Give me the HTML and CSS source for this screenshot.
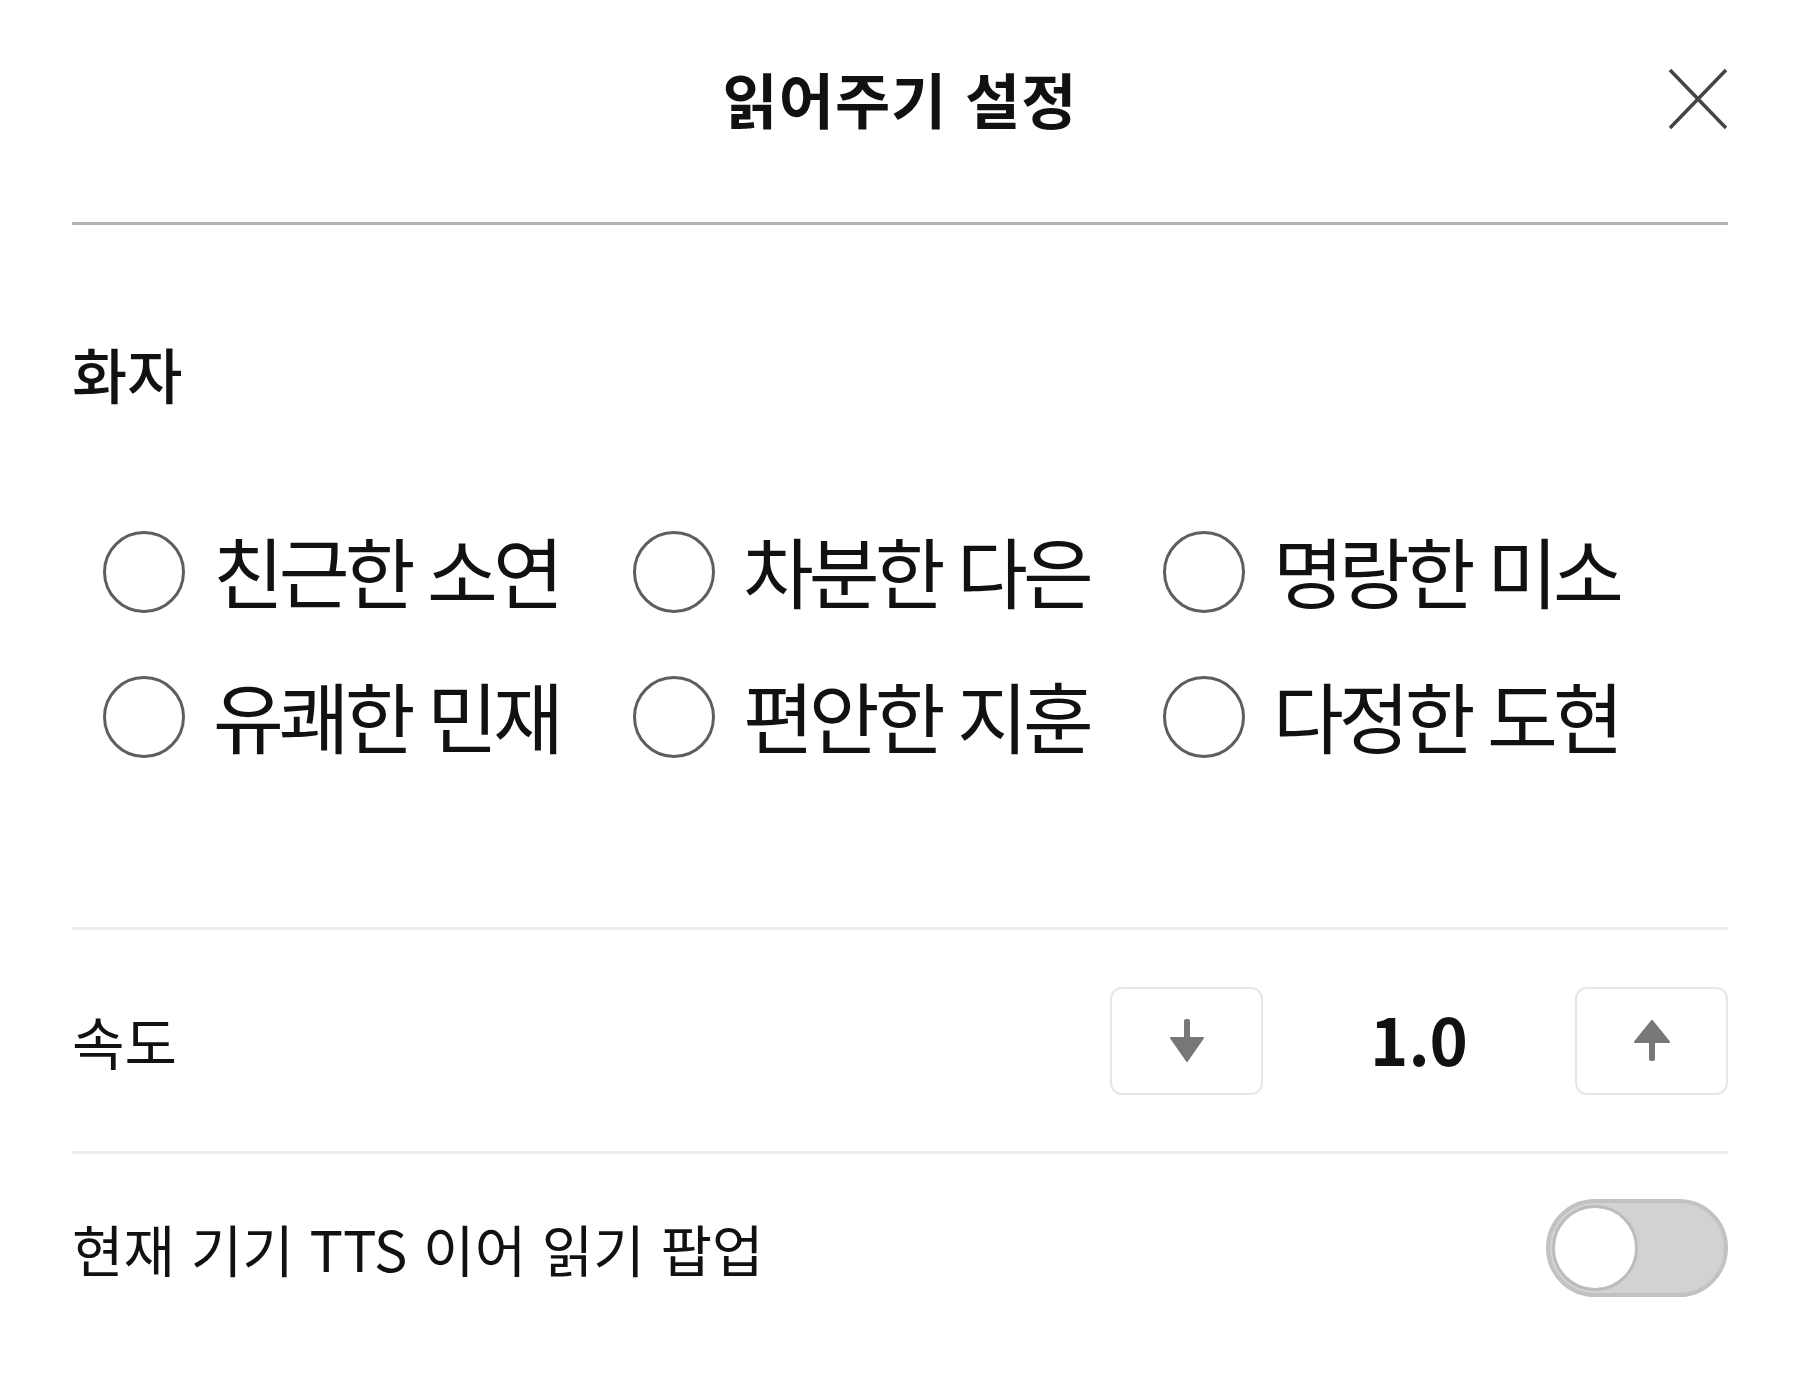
FILE: index.html
```html
<!DOCTYPE html>
<html lang="ko">
<head>
  <meta charset="UTF-8">
  <title>읽어주기 설정</title>
  <link rel="stylesheet" href="styles.css">
</head>
<body>

  <div class="sheet">
    <header class="sheet-head">
      <h1>읽어주기 설정</h1>
      <button class="close-btn" type="button" aria-label="닫기">
        <svg width="60" height="62" viewBox="0 0 60 62">
          <line x1="2" y1="2" x2="58" y2="60" stroke="#444" stroke-width="3.5"/>
          <line x1="58" y1="2" x2="2" y2="60" stroke="#444" stroke-width="3.5"/>
        </svg>
      </button>
    </header>

    <section class="voice">
      <h2>화자</h2>
      <div class="voice-list">
        <label class="voice-item"><input type="radio" name="voice"><span>친근한 소연</span></label>
        <label class="voice-item"><input type="radio" name="voice"><span>차분한 다은</span></label>
        <label class="voice-item"><input type="radio" name="voice"><span>명랑한 미소</span></label>
        <label class="voice-item"><input type="radio" name="voice"><span>유쾌한 민재</span></label>
        <label class="voice-item"><input type="radio" name="voice"><span>편안한 지훈</span></label>
        <label class="voice-item"><input type="radio" name="voice"><span>다정한 도현</span></label>
      </div>
    </section>

    <div class="row speed-row">
      <span class="row-label">속도</span>
      <div class="stepper">
        <button class="step-btn" type="button" aria-label="느리게">
          <svg width="40" height="44" viewBox="0 0 40 44">
            <rect x="17" y="0" width="6" height="24" rx="2" fill="#777"/>
            <path d="M4 19 L36 19 L20 42 Z" fill="#777" stroke="#777" stroke-width="2" stroke-linejoin="round"/>
          </svg>
        </button>
        <span class="speed-value">1.0</span>
        <button class="step-btn" type="button" aria-label="빠르게">
          <svg width="40" height="44" viewBox="0 0 40 44">
            <path d="M3 23 L37 23 L20 2 Z" fill="#777" stroke="#777" stroke-width="2" stroke-linejoin="round"/>
            <rect x="17" y="20" width="6" height="22" rx="2" fill="#777"/>
          </svg>
        </button>
      </div>
    </div>

    <div class="row popup-row">
      <span class="row-label">현재 기기 TTS 이어 읽기 팝업</span>
      <div class="toggle"><span class="knob"></span></div>
    </div>
  </div>

</body>
</html>
```

FILE: styles.css
```css
* {
  box-sizing: border-box;
}

body {
  margin: 0;
  padding: 0;
  background: #fff;
  color: #111;
  font-family: "Noto Sans CJK KR", "Noto Sans", sans-serif;
}

.sheet {
  padding: 0 72px;
}

.sheet-head {
  position: relative;
  height: 225px;
  padding-bottom: 26px;
  display: flex;
  align-items: center;
  justify-content: center;
  border-bottom: 3px solid #b3b3b3;
}

.sheet-head h1 {
  margin: 0;
  font-size: 60px;
  font-weight: 700;
  line-height: 1.2;
  letter-spacing: 1px;
}

.close-btn {
  position: absolute;
  right: 0;
  top: 68px;
  padding: 0;
  border: none;
  background: none;
  line-height: 0;
  cursor: pointer;
}

.voice h2 {
  margin: 108px 0 0;
  font-size: 60px;
  font-weight: 500;
  line-height: 80px;
}

.voice-list {
  margin-top: 118px;
  padding-left: 31px;
  display: grid;
  grid-template-columns: repeat(3, 530px);
  row-gap: 63px;
}

.voice-item {
  display: flex;
  align-items: center;
  gap: 28px;
  height: 82px;
  font-size: 77px;
  line-height: 1;
  letter-spacing: -5px;
  cursor: pointer;
}

.voice-item span {
  padding-bottom: 6px;
}

.voice-item input {
  appearance: none;
  margin: 0;
  width: 82px;
  height: 82px;
  flex: none;
  border: 3px solid #5e5e5e;
  border-radius: 50%;
  background: #fff;
}

.row {
  display: flex;
  align-items: center;
  justify-content: space-between;
  border-top: 3px solid #ececec;
}

.speed-row {
  margin-top: 169px;
  height: 224px;
}

.popup-row {
  height: 194px;
  padding-bottom: 4px;
}

.row-label {
  font-size: 57px;
  line-height: 1.2;
}

.popup-row .row-label {
  font-size: 56px;
}

.stepper {
  display: flex;
  align-items: center;
}

.step-btn {
  width: 153px;
  height: 108px;
  display: flex;
  align-items: center;
  justify-content: center;
  padding: 0;
  border: 2px solid #e6e6e6;
  border-radius: 12px;
  background: #fff;
  cursor: pointer;
}

.speed-value {
  width: 312px;
  padding-bottom: 4px;
  text-align: center;
  font-size: 65px;
  font-weight: 700;
  line-height: 1;
}

.toggle {
  width: 182px;
  height: 98px;
  padding: 2px;
  display: flex;
  align-items: center;
  border: 4px solid #c2c2c2;
  border-radius: 49px;
  background: #d2d2d2;
}

.knob {
  width: 86px;
  height: 86px;
  border: 3px solid #bcbcbc;
  border-radius: 50%;
  background: #fff;
}
```
